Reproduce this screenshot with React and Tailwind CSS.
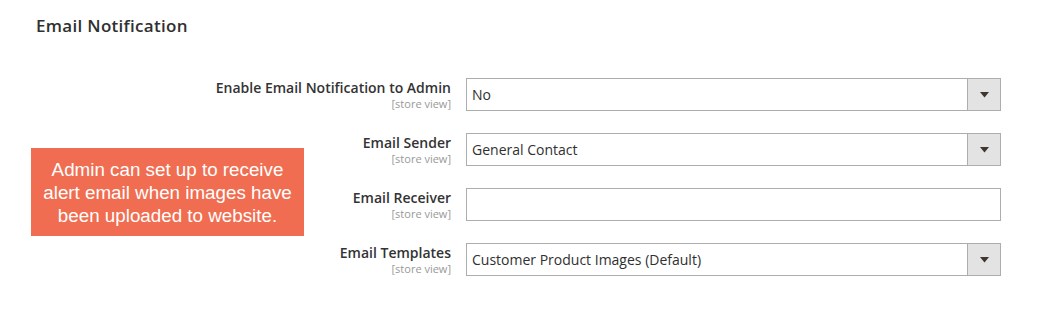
import React from "react";

const rows = [
  { label: "Enable Email Notification to Admin", value: "No", select: true },
  { label: "Email Sender", value: "General Contact", select: true },
  { label: "Email Receiver", value: "", select: false },
  { label: "Email Templates", value: "Customer Product Images (Default)", select: true },
];

function Field({ row }) {
  return (
    <div className="flex items-start">
      <div className="w-[451px] text-right">
        <div className="text-[14px] leading-[18px] font-[570] text-[#333333] pt-[1px]">{row.label}</div>
        <div className="text-[11px] leading-[13px] text-[#999999]">[store view]</div>
      </div>
      <div className="ml-[15px] w-[535px] h-[33px] border border-[#adadad] bg-white flex items-stretch">
        <div className="flex-1 flex items-center pl-[5px] text-[14px] text-[#303030]">{row.value}</div>
        {row.select && (
          <div className="w-[33px] border-l border-[#adadad] bg-[#e3e3e3] flex items-center justify-center">
            <svg width="9" height="6" viewBox="0 0 9 6">
              <path d="M0 0 H9 L4.5 5.5 Z" fill="#41362f" />
            </svg>
          </div>
        )}
      </div>
    </div>
  );
}

export default function App() {
  return (
    <div className="relative w-[1046px] h-[310px] bg-white" style={{ fontFamily: "'Open Sans', sans-serif" }}>
      <h2 className="pl-[36px] pt-[14px] text-[17px] leading-[24px] font-semibold text-[#303030] tracking-[0.3px]">
        Email Notification
      </h2>
      <div className="mt-[40px] flex flex-col gap-[22px]">
        {rows.map((r) => (
          <Field key={r.label} row={r} />
        ))}
      </div>
      <div
        className="absolute left-[31px] top-[148px] w-[273px] h-[88px] bg-[#f16d51] text-white text-[18.8px] leading-[23px] text-center flex items-center justify-center"
        style={{ fontFamily: "'Liberation Sans', Arial, sans-serif" }}
      >
        <p>
          Admin can set up to receive
          <br />
          alert email when images have
          <br />
          been uploaded to website.
        </p>
      </div>
    </div>
  );
}
